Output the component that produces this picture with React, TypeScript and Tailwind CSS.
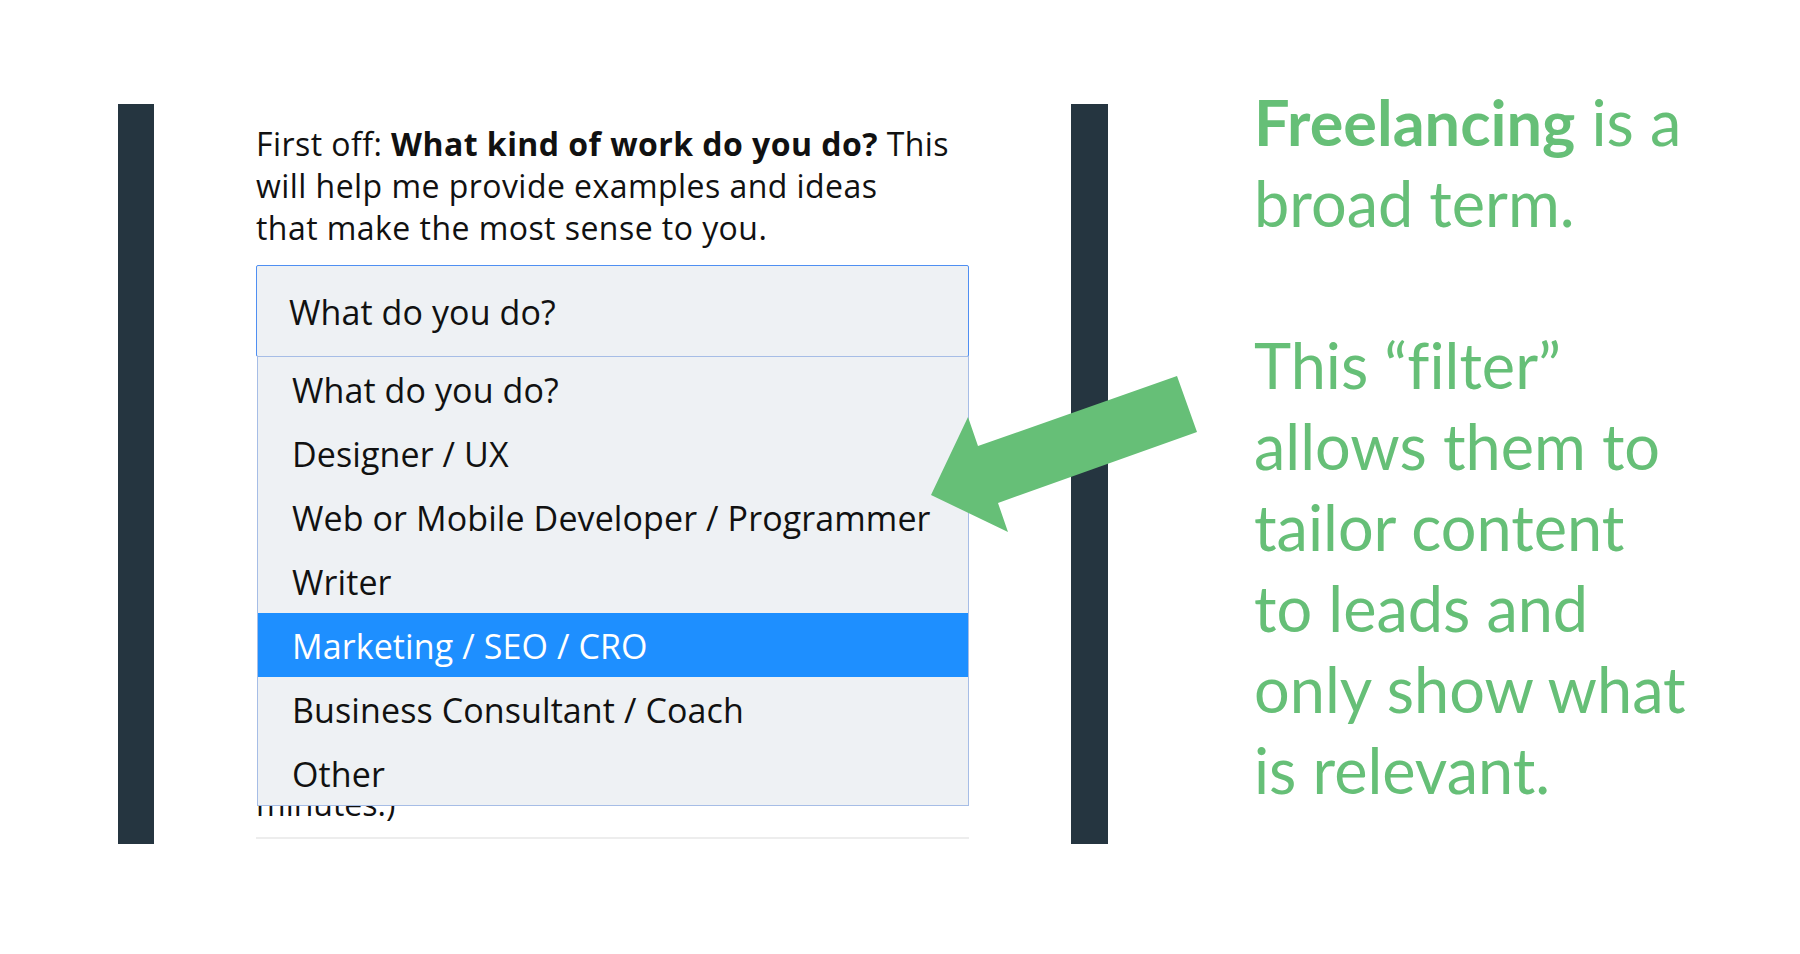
import React from "react";

const options = [
  "What do you do?",
  "Designer / UX",
  "Web or Mobile Developer / Programmer",
  "Writer",
  "Marketing / SEO / CRO",
  "Business Consultant / Coach",
  "Other",
];

export default function App() {
  return (
    <div className="relative h-[954px] w-[1800px] overflow-hidden bg-white">
      <div className="flex items-start pl-[118px] pt-[81px]">
        {/* left bar */}
        <div className="mt-[23px] h-[740px] w-[36px] shrink-0 bg-[#253540]" />

        {/* middle content */}
        <div
          className="mt-[23px] h-[740px] w-[917px] shrink-0 px-[102px] text-[#111]"
          style={{ fontFamily: "'Open Sans', Lato, sans-serif" }}
        >
          <p className="mt-[19px] whitespace-nowrap text-[32px] leading-[42px] tracking-[0.45px]">
            First off: <b className="font-bold">What kind of work do you do?</b> This
            <br />
            will help me provide examples and ideas
            <br />
            that make the most sense to you.
          </p>

          <div className="relative mt-[16px]">
            <div className="flex h-[92px] items-center rounded-[2px] border border-[#4f8ff2] bg-[#eef1f4] pl-[32px] pt-[3px] text-[34px] tracking-[0.1px]">
              What do you do?
            </div>
            <ul className="absolute left-[1px] right-0 top-[91px] z-10 border border-[#a6bde6] bg-[#eef1f4] text-[34px] tracking-[0.1px]">
              {options.map((o, i) => (
                <li
                  key={o}
                  className={
                    i === 4
                      ? "flex h-[64px] items-center whitespace-nowrap bg-[#1e8fff] pl-[34px] pt-[2px] text-white"
                      : "flex h-[64px] items-center whitespace-nowrap pl-[34px] pt-[2px]"
                  }
                >
                  {o}
                </li>
              ))}
            </ul>
          </div>

          <p className="mt-[426px] text-[32px] leading-[42px]">minutes.)</p>
          <div className="mt-[12px] h-[2px] w-full bg-[#ededed]" />
        </div>

        {/* right bar */}
        <div className="mt-[23px] h-[740px] w-[37px] shrink-0 bg-[#253540]" />

        {/* annotation text */}
        <div
          className="whitespace-nowrap pl-[146px] text-[63px] leading-[81px] text-[#66bf77]"
          style={{ fontFamily: "Lato, 'Open Sans', sans-serif", fontVariantLigatures: "none" }}
        >
          <p>
            <b className="font-bold">Freelancing</b> is a
            <br />
            broad term.
          </p>
          <p className="mt-[81px]">
            This “filter”
            <br />
            allows them to
            <br />
            tailor content
            <br />
            to leads and
            <br />
            only show what
            <br />
            is relevant.
          </p>
        </div>
      </div>

      {/* arrow */}
      <svg
        className="pointer-events-none absolute left-0 top-0 z-20"
        width="1800"
        height="954"
        viewBox="0 0 1800 954"
      >
        <polygon
          points="931,495 968,417 978,446 1177,376 1197,432 998,503 1008,532"
          fill="#66bf77"
        />
      </svg>
    </div>
  );
}
